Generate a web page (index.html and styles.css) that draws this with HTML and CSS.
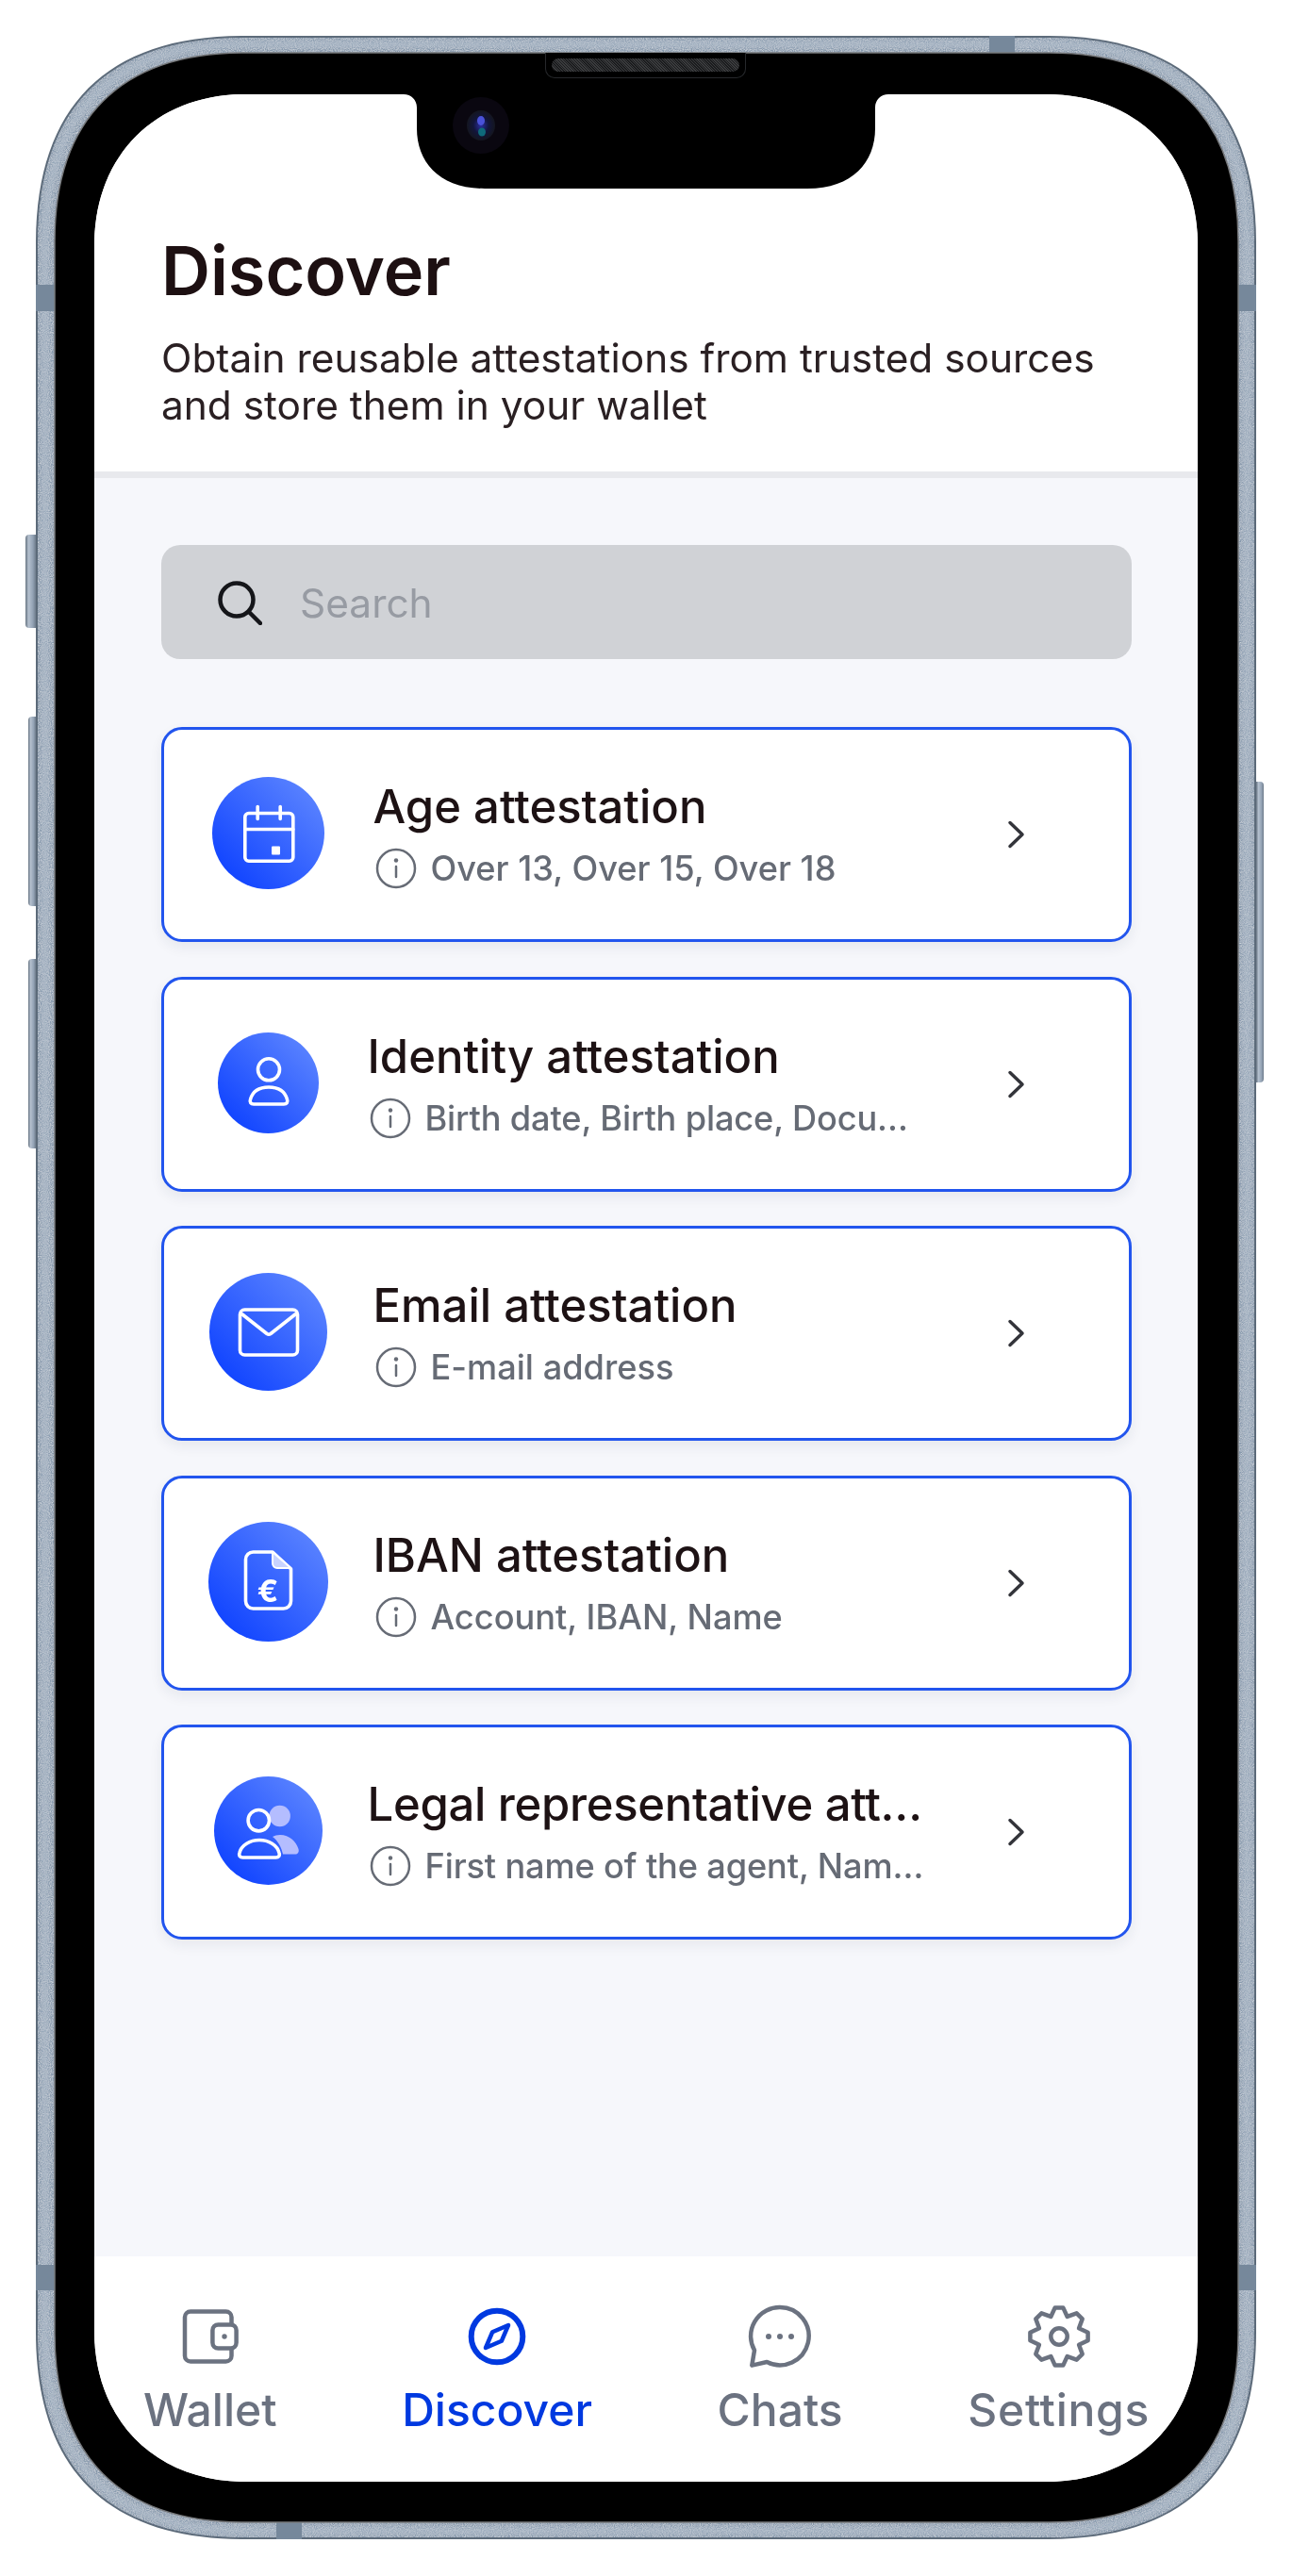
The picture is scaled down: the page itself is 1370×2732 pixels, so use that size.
FILE: index.html
```html
<!DOCTYPE html>
<html lang="en">
<head>
<meta charset="utf-8">
<title>Discover</title>
<link rel="stylesheet" href="styles.css">
</head>
<body>
<div class="stage">
  <div class="device">
    <svg class="frame" width="1294" height="2655" viewBox="0 0 1294 2655" aria-hidden="true">
      <defs>
        <filter id="grain" x="0" y="0" width="100%" height="100%">
          <feTurbulence type="fractalNoise" baseFrequency="0.9" numOctaves="2" seed="4" result="n"/>
          <feColorMatrix in="n" type="matrix" values="0 0 0 0 1  0 0 0 0 1  0 0 0 0 1  0.9 0 0 0 -0.28" result="w"/>
          <feComposite in="w" in2="SourceGraphic" operator="in" result="c"/>
          <feMerge><feMergeNode in="SourceGraphic"/><feMergeNode in="c"/></feMerge>
        </filter>
        <filter id="soft" x="-5%" y="-5%" width="110%" height="110%"><feGaussianBlur stdDeviation="2"/></filter>
      </defs>
      <path class="frame-edge" d="M220 0H1074C1219 0 1294 75 1294 220V2435C1294 2580 1219 2655 1074 2655H220C75 2655 0 2580 0 2435V220C0 75 75 0 220 0Z"/>
      <path class="frame-metal" filter="url(#grain)" d="M220 2H1074C1218 2 1292 76 1292 220V2435C1292 2579 1218 2653 1074 2653H220C76 2653 2 2579 2 2435V220C2 76 76 2 220 2Z"/>
      <path class="sheen" filter="url(#soft)" d="M220 9H1074C1212 9 1284 81 1284 219V2436C1284 2574 1212 2646 1074 2646H220C82 2646 10 2574 10 2436V219C10 81 82 9 220 9Z"/>
      <rect class="band" x="1011" y="0" width="27" height="18"/>
      <rect class="band" x="255" y="2637" width="27" height="18"/>
      <rect class="band" x="0" y="264" width="20" height="28"/>
      <rect class="band" x="1275" y="264" width="19" height="28"/>
      <rect class="band" x="0" y="2364" width="20" height="27"/>
      <rect class="band" x="1275" y="2364" width="19" height="27"/>
      <path class="bezel-shape" d="M220 18H1075C1205 18 1275 88 1275 218V2437C1275 2567 1205 2637 1075 2637H220C90 2637 20 2567 20 2437V218C20 88 90 18 220 18Z"/>
    </svg>
    <div class="btn btn-mute"></div>
    <div class="btn btn-up"></div>
    <div class="btn btn-down"></div>
    <div class="btn btn-power"></div>

    <div class="bezel">
      <div class="speaker"><div class="speaker-mesh"></div></div>
      <div class="screen">
        <div class="head">
          <h1 class="head-title">Discover</h1>
          <p class="head-sub">Obtain reusable attestations from trusted sources<br>and store them in your wallet</p>
        </div>

        <main class="main">
          <div class="search">
            <svg class="search-icon" width="48" height="48" viewBox="0 0 48 48" aria-hidden="true"><circle cx="21" cy="21" r="17.5"/><path d="M34 34l12 12"/></svg>
            <span class="search-text">Search</span>
          </div>

          <ul class="cards">
            <li class="card">
              <div class="thumb-slot"><div class="thumb thumb-age">
                <svg class="glyph" width="72" height="72" viewBox="0 0 72 72" aria-hidden="true">
                  <rect x="10.8" y="14.5" width="51" height="50.7" rx="4"/>
                  <path d="M24.2 7.5v13M48.2 7.5v13M10.8 31.5h51"/>
                  <rect class="solid" x="39" y="49.5" width="9" height="9" rx="1"/>
                </svg>
              </div></div>
              <div class="card-body">
                <div class="card-title">Age attestation</div>
                <div class="card-sub">
                  <svg class="info" width="44" height="44" viewBox="0 0 44 44" aria-hidden="true"><circle cx="22" cy="22" r="20"/><path d="M22 20v11"/><circle class="dot" cx="22" cy="13.5" r="2.2"/></svg>
                  <span>Over 13, Over 15, Over 18</span>
                </div>
              </div>
              <svg class="chev" width="24" height="36" viewBox="0 0 24 36" aria-hidden="true"><path d="M5 5.500l13 12.500-13 12.500"/></svg>
            </li>

            <li class="card">
              <div class="thumb-slot"><div class="thumb thumb-id">
                <svg class="glyph" width="72" height="72" viewBox="0 0 72 72" aria-hidden="true">
                  <circle cx="36" cy="22.300" r="11.500"/>
                  <path d="M20 59h32c3 0 4.500-2 3.500-5C53 45 46 41 36 41S19 45 16.500 54c-1 3 .5 5 3.500 5z"/>
                </svg>
              </div></div>
              <div class="card-body card-body-tight">
                <div class="card-title">Identity attestation</div>
                <div class="card-sub card-sub-cut">
                  <svg class="info" width="44" height="44" viewBox="0 0 44 44" aria-hidden="true"><circle cx="22" cy="22" r="20"/><path d="M22 20v11"/><circle class="dot" cx="22" cy="13.5" r="2.2"/></svg>
                  <span>Birth date, Birth place, Docu…</span>
                </div>
              </div>
              <svg class="chev" width="24" height="36" viewBox="0 0 24 36" aria-hidden="true"><path d="M5 5.500l13 12.500-13 12.500"/></svg>
            </li>

            <li class="card">
              <div class="thumb-slot"><div class="thumb thumb-mail">
                <svg class="glyph" width="72" height="72" viewBox="0 0 72 72" aria-hidden="true">
                  <rect x="5.500" y="12" width="61" height="48" rx="5"/>
                  <path d="M8 17l26 20.500a3.500 3.500 0 0 0 4 0L64 17"/>
                </svg>
              </div></div>
              <div class="card-body">
                <div class="card-title">Email attestation</div>
                <div class="card-sub">
                  <svg class="info" width="44" height="44" viewBox="0 0 44 44" aria-hidden="true"><circle cx="22" cy="22" r="20"/><path d="M22 20v11"/><circle class="dot" cx="22" cy="13.5" r="2.2"/></svg>
                  <span>E-mail address</span>
                </div>
              </div>
              <svg class="chev" width="24" height="36" viewBox="0 0 24 36" aria-hidden="true"><path d="M5 5.500l13 12.500-13 12.500"/></svg>
            </li>

            <li class="card">
              <div class="thumb-slot"><div class="thumb thumb-iban">
                <svg class="glyph" width="72" height="72" viewBox="0 0 72 72" aria-hidden="true">
                  <path d="M19.500 5H40L59.500 23V57a8 8 0 0 1-8 8H19.500a8 8 0 0 1-8-8V13a8 8 0 0 1 8-8z"/>
                  <path class="soft" d="M40 5v12a5 5 0 0 0 5 5h14.500z"/>
                  <text class="euro" x="35" y="58" text-anchor="middle">€</text>
                </svg>
              </div></div>
              <div class="card-body">
                <div class="card-title">IBAN attestation</div>
                <div class="card-sub">
                  <svg class="info" width="44" height="44" viewBox="0 0 44 44" aria-hidden="true"><circle cx="22" cy="22" r="20"/><path d="M22 20v11"/><circle class="dot" cx="22" cy="13.5" r="2.2"/></svg>
                  <span>Account, IBAN, Name</span>
                </div>
              </div>
              <svg class="chev" width="24" height="36" viewBox="0 0 24 36" aria-hidden="true"><path d="M5 5.500l13 12.500-13 12.500"/></svg>
            </li>

            <li class="card">
              <div class="thumb-slot"><div class="thumb thumb-legal">
                <svg class="glyph" width="72" height="72" viewBox="0 0 72 72" aria-hidden="true">
                  <circle class="back" cx="47.700" cy="20" r="11.200"/>
                  <path class="back" d="M40 42c2-1.300 5-2 8-2 10 0 17 7 19.500 15 1 3.500-1 5.500-3.500 5.500H51c-1.500-7-5-14-11-18.500z"/>
                  <circle cx="25.300" cy="24.700" r="11.200"/>
                  <path d="M8.500 64h35c3 0 4.500-2 3.500-5C45 51 36 45.500 26 45.500S7 51 5 59c-1 3 .5 5 3.500 5z"/>
                </svg>
              </div></div>
              <div class="card-body card-body-tight">
                <div class="card-title card-title-cut">Legal representative att…</div>
                <div class="card-sub card-sub-cut">
                  <svg class="info" width="44" height="44" viewBox="0 0 44 44" aria-hidden="true"><circle cx="22" cy="22" r="20"/><path d="M22 20v11"/><circle class="dot" cx="22" cy="13.5" r="2.2"/></svg>
                  <span>First name of the agent, Nam…</span>
                </div>
              </div>
              <svg class="chev" width="24" height="36" viewBox="0 0 24 36" aria-hidden="true"><path d="M5 5.500l13 12.500-13 12.500"/></svg>
            </li>
          </ul>
        </main>

        <nav class="tabs">
          <div class="tab">
            <svg class="tab-icon" width="72" height="72" viewBox="0 0 24 24" aria-hidden="true">
              <rect x="3" y="3.200" width="16.500" height="17.600" rx="2"/>
              <rect class="fill-white" x="12.800" y="7.800" width="8.400" height="8.400" rx="2"/>
              <circle class="tab-dot" cx="17" cy="12" r=".9"/>
            </svg>
            <span>Wallet</span>
          </div>
          <div class="tab tab-active">
            <svg class="tab-icon" width="72" height="72" viewBox="0 0 24 24" aria-hidden="true">
              <circle cx="12" cy="12" r="9.100"/>
              <path class="thin" d="M16 8l-2.400 5.600L8 16l2.400-5.600z"/>
            </svg>
            <span>Discover</span>
          </div>
          <div class="tab">
            <svg class="tab-icon" width="72" height="72" viewBox="0 0 24 24" aria-hidden="true">
              <path d="M12 1.700a10.200 10.200 0 1 1-4.600 19.300l-5.300 1.200.9-5.300A10.200 10.200 0 0 1 12 1.700z"/>
              <circle class="tab-dot" cx="8" cy="12" r="1"/><circle class="tab-dot" cx="12" cy="12" r="1"/><circle class="tab-dot" cx="16" cy="12" r="1"/>
            </svg>
            <span>Chats</span>
          </div>
          <div class="tab tab-settings">
            <svg class="tab-icon" width="72" height="72" viewBox="0 0 24 24" aria-hidden="true">
              <path d="M10.570 1.800H13.430L14.910 4.980 18.200 3.770 20.230 5.800 19.020 9.090 22.200 10.570V13.430L19.020 14.910 20.230 18.200 18.200 20.230 14.910 19.020 13.430 22.200H10.570L9.090 19.020 5.800 20.230 3.770 18.200 4.980 14.910 1.800 13.430V10.570L4.980 9.090 3.770 5.800 5.800 3.770 9.090 4.980Z"/>
              <circle cx="12" cy="12" r="2.900"/>
            </svg>
            <span>Settings</span>
          </div>
        </nav>

        <svg class="notch" width="514" height="100" viewBox="0 0 514 100" aria-hidden="true">
          <defs>
            <radialGradient id="lens" cx="50%" cy="50%" r="50%">
              <stop offset="0" stop-color="#2a2fa0"/>
              <stop offset="0.55" stop-color="#12153a"/>
              <stop offset="1" stop-color="#14161f"/>
            </radialGradient>
          </defs>
          <path d="M0 0C8 0 14 6 14 14V36C14 72 38 100 86 100H428C476 100 500 72 500 36V14C500 6 506 0 514 0Z" fill="#000"/>
          <circle cx="82" cy="33" r="30" fill="#0a0710"/>
          <ellipse cx="82" cy="33" rx="15" ry="16" fill="url(#lens)"/>
          <ellipse cx="82" cy="28" rx="4" ry="5" fill="#4a52d8"/>
          <ellipse cx="83" cy="40" rx="4" ry="4.5" fill="#0f6a7a"/>
        </svg>
      </div>
    </div>
  </div>
</div>
</body>
</html>
```

FILE: styles.css
```css
* { box-sizing: border-box; }
html, body { margin: 0; padding: 0; background: #fff; }
body { font-family: Inter, "Liberation Sans", sans-serif; color: #1d1214; }

.stage { padding: 38px; width: 1370px; height: 2732px; }
.device {
  position: relative;
  width: 1294px;
  height: 2655px;
  padding: 18px 19px 18px 20px;
}
.frame { position: absolute; left: 0; top: 0; }
.frame-edge { fill: #5c6a79; }
.frame-metal { fill: #8496aa; }
.sheen { fill: none; stroke: #b3c0ce; stroke-width: 8; opacity: .55; }
.band { fill: #76889b; }
.bezel-shape { fill: #000; stroke: #77797c; stroke-width: 1.500; }

.btn {
  position: absolute;
  background: linear-gradient(90deg, #667381 0, #b4c0ce 30%, #94a3b5 70%, #6f7d8c 100%);
  border-radius: 4px 0 0 4px;
}
.btn-mute { left: -11px; top: 529px; width: 11px; height: 99px; }
.btn-up { left: -8px; top: 722px; width: 8px; height: 201px; }
.btn-down { left: -8px; top: 979px; width: 8px; height: 201px; }
.btn-power { right: -8px; top: 791px; width: 8px; height: 319px; border-radius: 0 4px 4px 0; }

.bezel {
  position: relative;
  width: 1255px;
  height: 2619px;
  padding: 44px 43px 43px 42px;
}
.speaker {
  position: absolute;
  left: 520px;
  top: 0;
  width: 213px;
  height: 27px;
  background: #000;
  border: 1px solid #26282b;
  border-top: 0;
  border-radius: 0 0 10px 10px;
  padding: 6px 6px 0;
}
.speaker-mesh {
  height: 14px;
  border-radius: 7px;
  background: repeating-linear-gradient(45deg, #3a3b3d 0 1px, #1b1c1e 1px 2px);
}

.screen {
  position: relative;
  width: 1170px;
  height: 2532px;
  display: flex;
  flex-direction: column;
  background: #fff;
  clip-path: path("M160 0H1010C1105 0 1170 65 1170 160V2372C1170 2467 1105 2532 1010 2532H160C65 2532 0 2467 0 2372V160C0 65 65 0 160 0Z");
}
.notch { position: absolute; left: 328px; top: 0; }

.head {
  padding: 144px 71px 45px;
  border-bottom: 7px solid #e8e9ed;
  background: #fff;
  filter: blur(.45px);
}
.head-title {
  margin: 0 0 25px;
  font-size: 72px;
  line-height: 86px;
  font-weight: 600;
  color: #1d1012;
}
.head-sub {
  margin: 0;
  font-size: 42.4px;
  line-height: 50px;
  font-weight: 400;
  color: #2a2023;
}

.main {
  flex: 1;
  padding: 71px 70px 0 71px;
  background: #f6f7fb;
  filter: blur(.45px);
}
.search {
  display: flex;
  align-items: center;
  height: 121px;
  padding-left: 59px;
  gap: 40px;
  background: #d0d2d6;
  border-radius: 20px;
}
.search-icon { fill: none; stroke: #15161a; stroke-width: 4.500; stroke-linecap: round; }
.search-text { font-size: 42.4px; line-height: 50px; padding-top: 3px; color: #979ba3; }

.cards {
  list-style: none;
  margin: 72px 0 0;
  padding: 0;
  display: flex;
  flex-direction: column;
  gap: 36.600px;
}
.card {
  display: flex;
  align-items: center;
  height: 228px;
  padding-left: 47px;
  padding-right: 107px;
  background: #fff;
  border: 3.500px solid #2255ee;
  border-radius: 22px;
  box-shadow: 0 6px 14px rgba(30, 40, 70, .07);
}
.thumb-slot {
  width: 127px;
  flex: none;
  display: flex;
  align-items: center;
  justify-content: center;
  margin-right: 47.500px;
  margin-bottom: 3px;
}
.thumb {
  display: flex;
  align-items: center;
  justify-content: center;
  border-radius: 50%;
  background: linear-gradient(to top right, #1346ff 15%, #6088ff 95%);
}
.thumb-age { width: 119px; height: 119px; }
.thumb-id { width: 107px; height: 107px; }
.thumb-mail { width: 125px; height: 125px; }
.thumb-iban { width: 127px; height: 127px; }
.thumb-legal { width: 115px; height: 115px; }

.glyph { fill: none; stroke: #fff; stroke-width: 3.600; stroke-linecap: round; stroke-linejoin: round; }
.glyph .solid { fill: #fff; stroke: none; }
.glyph .soft { fill: #c8d3ff; stroke-width: 2; }
.glyph .back { fill: #b4bdff; stroke: none; }
.glyph .euro { fill: #fff; stroke: none; font-family: Inter, sans-serif; font-weight: 700; font-size: 33px; }

.card-body { flex: 1; min-width: 0; }
.card-body-tight { margin-left: -6px; }
.card-title {
  font-size: 49px;
  line-height: 60px;
  font-weight: 500;
  color: #1d1214;
  white-space: nowrap;
}
.card-title-cut { letter-spacing: -.3px; }
.card-sub {
  margin-top: 12px;
  display: flex;
  align-items: center;
  gap: 15px;
  padding-left: 2px;
  font-size: 36.200px;
  line-height: 46px;
  font-weight: 500;
  color: #666b75;
  white-space: nowrap;
}
.card-sub-cut { letter-spacing: -.15px; }
.info { flex: none; fill: none; stroke: #666b75; stroke-width: 2.500; stroke-linecap: round; }
.info .dot { fill: #666b75; stroke: none; }
.chev { flex: none; fill: none; stroke: #33343a; stroke-width: 3.500; stroke-linecap: round; stroke-linejoin: round; }

.tabs {
  height: 239px;
  flex: none;
  display: flex;
  justify-content: space-between;
  padding: 49px 51px 0 52px;
  background: #fff;
  filter: blur(.45px);
}
.tab {
  display: flex;
  flex-direction: column;
  align-items: center;
  gap: 14px;
  font-size: 48px;
  line-height: 56px;
  font-weight: 500;
  color: #6b7280;
}
.tab-settings { letter-spacing: .7px; }
.tab-icon { fill: none; stroke: currentColor; stroke-width: 1.500; stroke-linecap: round; stroke-linejoin: round; }
.tab-icon .fill-white { fill: #fff; }
.tab-icon .tab-dot { fill: currentColor; stroke: none; }
.tab-active { color: #0039e0; }
.tab-active .tab-icon { stroke-width: 2; }
.tab-active .tab-icon .thin { stroke-width: 1.500; }
```
